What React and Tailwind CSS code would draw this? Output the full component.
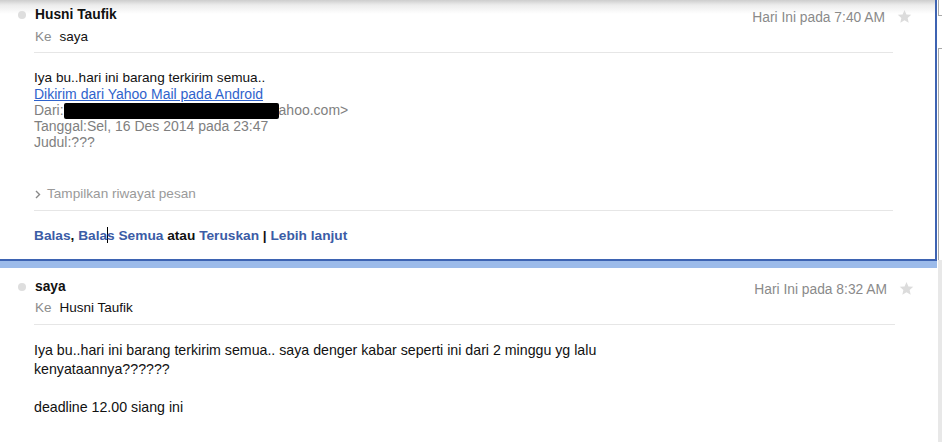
import React from "react";

function Dot() {
  return <span className="block w-[8px] h-[8px] rounded-full bg-[#dedede]" />;
}

function Star() {
  return (
    <svg width="15" height="15" viewBox="0 0 24 24" className="block">
      <polygon
        points="12,1.5 15.1,8.6 22.8,9.3 17,14.4 18.7,22 12,18 5.3,22 7,14.4 1.2,9.3 8.9,8.6"
        fill="#dcdcdc"
      />
    </svg>
  );
}

function Header({ from, to, time, gap }) {
  return (
    <>
      <div className="flex items-center h-[16px]">
        <div className="w-[35px] flex justify-start pl-[18px]">
          <Dot />
        </div>
        <div className="flex-1 flex items-center">
          <span className="font-bold text-[13.8px] text-[#111]">{from}</span>
          <span className="ml-auto mr-[8px] mt-[6px] text-[13.8px] text-[#8a8a8a]">{time}</span>
        </div>
        <div className="w-[42px] flex pl-[4px] pt-[2px]">
          <Star />
        </div>
      </div>
      <div className={"flex h-[16px] items-center pl-[35px] " + gap}>
        <span className="text-[13.5px] text-[#8c8c8c]">Ke</span>
        <span className="ml-[8px] text-[13.5px] text-[#111]">{to}</span>
      </div>
    </>
  );
}

function Rule({ className = "" }) {
  return <div className={"ml-[34px] mr-[42px] h-px bg-[#e6e6e6] " + className} />;
}

export default function App() {
  return (
    <div
      className="flex w-[942px] h-[442px] overflow-hidden bg-white"
      style={{ fontFamily: '"Liberation Sans", Arial, sans-serif' }}
    >
      <div className="flex flex-col w-[937px]">
        {/* first message */}
        <div className="border-r-2 border-b-2 border-[#3d63b2] bg-[linear-gradient(to_bottom,#cdcdcd_0px,#ececec_5px,#ffffff_14px)] pt-[7px] pb-[15px]">
          <Header from="Husni Taufik" to="saya" time="Hari Ini pada 7:40 AM" gap="mt-[6px]" />
          <Rule className="mt-[7px]" />
          <div className="pl-[34px] pt-[17px] text-[14px] leading-[16px]">
            <div className="text-[#111] text-[13.6px]">Iya bu..hari ini barang terkirim semua..</div>
            <div className="text-[#2f63cc] underline">Dikirim dari Yahoo Mail pada Android</div>
            <div className="text-[#7f7f7f] whitespace-nowrap">
              Dari:
              <span className="inline-block align-top w-[215px] h-[16px] bg-black rounded-[2px] mt-[1px] -mb-[1px]" />
              ahoo.com&gt;
            </div>
            <div className="text-[#7f7f7f]">Tanggal:Sel, 16 Des 2014 pada 23:47</div>
            <div className="text-[#7f7f7f]">Judul:???</div>
            <div className="mt-[36px] flex items-center text-[#9a9a9a] text-[13.6px]">
              <svg width="6" height="9" viewBox="0 0 6 9" className="mr-[6px] ml-px">
                <path d="M1 1 L4.5 4.5 L1 8" fill="none" stroke="#888" strokeWidth="1.4" />
              </svg>
              Tampilkan riwayat pesan
            </div>
          </div>
          <Rule className="mt-[8px]" />
          <div className="pl-[34px] pt-[16px] text-[13.7px] leading-[16px] font-bold text-[#3b5ca6] whitespace-nowrap">
            Balas<span className="text-[#111]">,</span> Bala
            <span className="inline-block align-[-3px] w-px h-[16px] bg-black -mr-px" />s Semua{" "}
            <span className="text-[#111]">atau</span> Teruskan <span className="text-[#111]">|</span> Lebih lanjut
          </div>
        </div>
        <div className="h-[7px] bg-[#9cbbea]" />

        {/* second message */}
        <div className="pt-[11px]">
          <Header from="saya" to="Husni Taufik" time="Hari Ini pada 8:32 AM" gap="mt-[5px]" />
          <Rule className="mt-[8px]" />
          <div className="pl-[34px] pt-[16px] text-[14.2px] leading-[19px] text-[#111]">
            <div>Iya bu..hari ini barang terkirim semua.. saya denger kabar seperti ini dari 2 minggu yg lalu</div>
            <div>kenyataannya??????</div>
            <div className="h-[19px]" />
            <div>deadline 12.00 siang ini</div>
          </div>
        </div>
      </div>

      {/* scroll edge */}
      <div className="flex flex-col w-[5px]">
        <div className="h-[16px] ml-px border-l border-b border-[#a9a9a9]" />
        <div className="h-[32px]" />
        <div className="h-[212px] ml-px border-l border-t border-[#a9a9a9]" />
        <div className="flex-1 ml-px bg-[#e8e8e8]" />
      </div>
    </div>
  );
}
